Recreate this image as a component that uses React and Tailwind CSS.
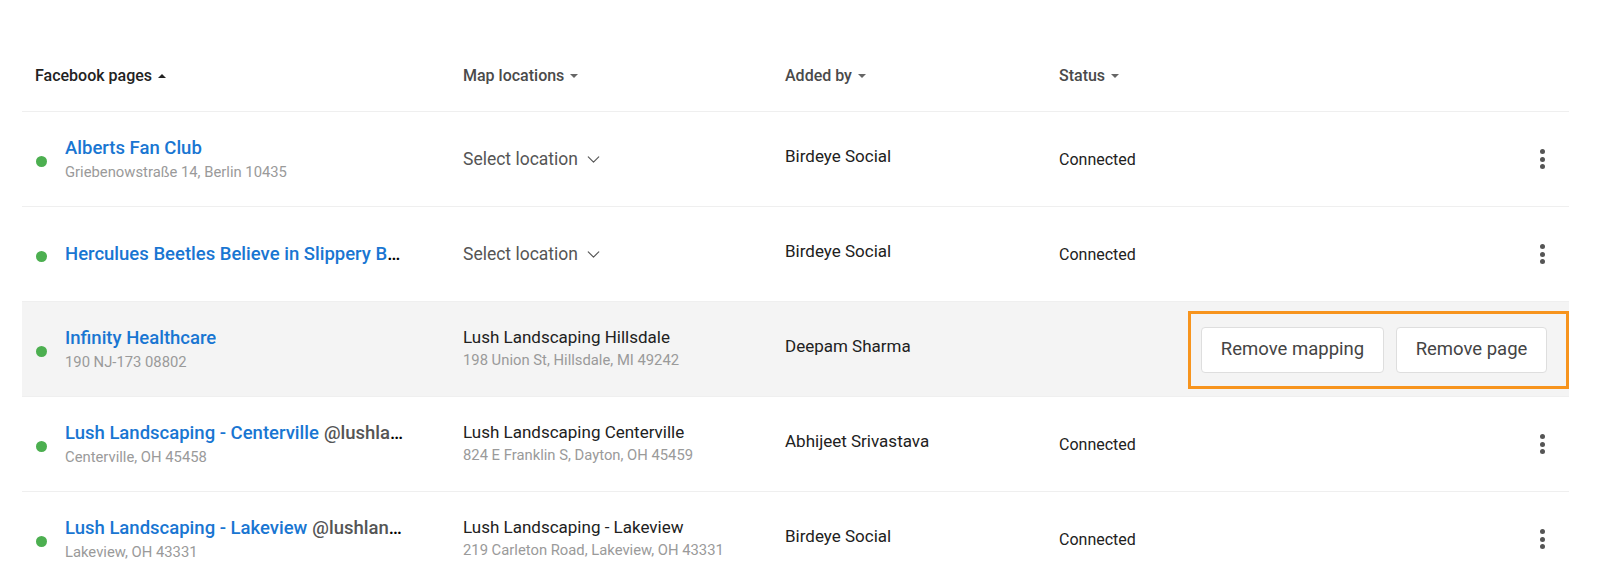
import { ChevronDown } from 'lucide-react';

const rows = [
  {
    name: 'Alberts Fan Club',
    address: 'Griebenowstraße 14, Berlin 10435',
    location: null,
    addedBy: 'Birdeye Social',
    status: 'Connected',
  },
  {
    name: 'Herculues Beetles Believe in Slippery Bananas',
    address: '',
    location: null,
    addedBy: 'Birdeye Social',
    status: 'Connected',
  },
  {
    name: 'Infinity Healthcare',
    address: '190 NJ-173 08802',
    location: { name: 'Lush Landscaping Hillsdale', address: '198 Union St, Hillsdale, MI 49242' },
    addedBy: 'Deepam Sharma',
    status: 'Connected',
    active: true,
  },
  {
    name: 'Lush Landscaping - Centerville',
    handle: '@lushlandscapingcenterville',
    address: 'Centerville, OH 45458',
    location: { name: 'Lush Landscaping Centerville', address: '824 E Franklin S, Dayton, OH 45459' },
    addedBy: 'Abhijeet Srivastava',
    status: 'Connected',
  },
  {
    name: 'Lush Landscaping - Lakeview',
    handle: '@lushlandscapinglakeview',
    address: 'Lakeview, OH 43331',
    location: { name: 'Lush Landscaping - Lakeview', address: '219 Carleton Road, Lakeview, OH 43331' },
    addedBy: 'Birdeye Social',
    status: 'Connected',
  },
];

const grid = 'grid grid-cols-[441px_322px_274px_1fr]';

function SortArrow({ up, dark }) {
  return (
    <span
      className={
        'inline-block ml-[6px] w-0 h-0 border-l-[4px] border-r-[4px] border-l-transparent border-r-transparent ' +
        (up ? 'border-b-[4px] ' : 'border-t-[4px] ') +
        (dark ? (up ? 'border-b-[#222]' : 'border-t-[#222]') : up ? 'border-b-[#666]' : 'border-t-[#666]')
      }
    />
  );
}

function Kebab() {
  return (
    <div className="flex flex-col gap-[2.5px] items-center">
      <span className="w-[5px] h-[5px] rounded-full bg-[#555]" />
      <span className="w-[5px] h-[5px] rounded-full bg-[#555]" />
      <span className="w-[5px] h-[5px] rounded-full bg-[#555]" />
    </div>
  );
}

export default function App() {
  return (
    <div className="min-h-[584px] bg-white pt-[41px] pl-[22px] pr-[31px] font-['Roboto','Liberation_Sans',sans-serif] antialiased">
      <div className={grid + ' h-[71px] items-center border-b border-[#efefef] text-[16px] font-medium'}>
        <div className="pl-[13px] text-[#222] flex items-center">
          Facebook pages
          <SortArrow up dark />
        </div>
        <div className="text-[#4a4a4a] flex items-center">
          Map locations
          <SortArrow />
        </div>
        <div className="text-[#4a4a4a] flex items-center">
          Added by
          <SortArrow />
        </div>
        <div className="text-[#4a4a4a] flex items-center">
          Status
          <SortArrow />
        </div>
      </div>

      {rows.map((r) => (
        <div
          key={r.name}
          className={grid + ' h-[95px] items-center border-b border-[#efefef] ' + (r.active ? 'bg-[#f4f4f4]' : '')}
        >
          <div className="flex items-center pl-[14px]">
            <span className="w-[11px] h-[11px] rounded-full bg-[#4caf50] shrink-0 mt-[4px]" />
            <div className="ml-[18px] min-w-0">
              <div className="max-w-[344px] truncate text-[18.5px] font-medium leading-[23px]">
                <span className="text-[#1976d2]">{r.name}</span>
                {r.handle && <span className="text-[#555] ml-[5px]">{r.handle}</span>}
              </div>
              {r.address && <div className="text-[14.8px] text-[#9a9a9a] leading-[20px] mt-[2px]">{r.address}</div>}
            </div>
          </div>

          <div>
            {r.location ? (
              <div className="-mt-[3px]">
                <div className="text-[17px] text-[#212121] leading-[22px]">{r.location.name}</div>
                <div className="text-[14.8px] text-[#9a9a9a] leading-[20px] mt-[2px]">{r.location.address}</div>
              </div>
            ) : (
              <div className="flex items-center text-[17.5px] text-[#555]">
                Select location
                <ChevronDown className="ml-[5px] w-[21px] h-[21px] text-[#555]" strokeWidth={1.3} />
              </div>
            )}
          </div>

          <div className="text-[17px] text-[#212121] -mt-[4px]">{r.addedBy}</div>

          <div className="flex items-center justify-between pr-[24px]">
            {r.active ? (
              <>
                <span />
                <div className="-mr-[24px] mt-[2px] flex gap-[12px] border-[3px] border-[#f7941d] pl-[10px] pr-[19px] py-[13px]">
                  <button className="w-[183px] h-[46px] bg-white border border-[#dedede] rounded-[4px] text-[18.5px] text-[#444]">
                    Remove mapping
                  </button>
                  <button className="w-[151px] h-[46px] bg-white border border-[#dedede] rounded-[4px] text-[18.5px] text-[#444]">
                    Remove page
                  </button>
                </div>
              </>
            ) : (
              <>
                <span className="text-[16px] text-[#212121] mt-[2px]">{r.status}</span>
                <Kebab />
              </>
            )}
          </div>
        </div>
      ))}
    </div>
  );
}
